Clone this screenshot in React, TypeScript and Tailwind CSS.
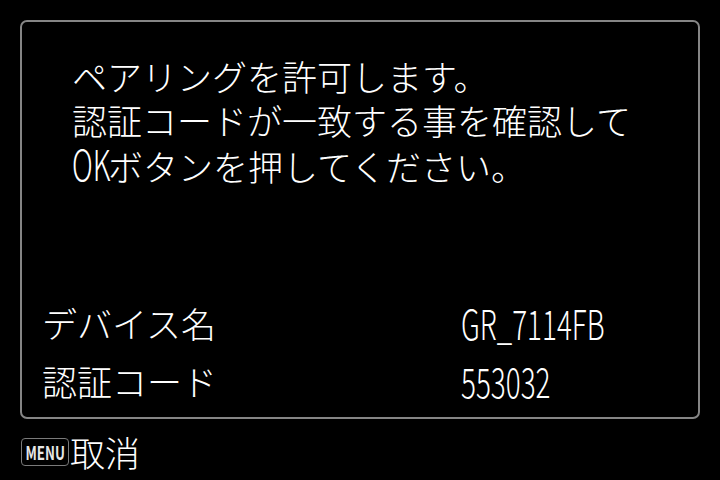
import React from 'react';

const FONT = {
  fontFamily: '"Noto Sans CJK JP", "DejaVu Sans", sans-serif',
};

// Narrow latin text, as on the camera's screen
function Narrow({ text, width, className = '' }: { text: string; width: number; className?: string }) {
  return (
    <span className={`inline-block overflow-visible whitespace-nowrap ${className}`} style={{ width }}>
      <span className="inline-block origin-left scale-x-[0.68]">{text}</span>
    </span>
  );
}

function InfoRow({ label, value, width }: { label: string; value: string; width: number }) {
  return (
    <div className="flex h-[58px] items-center">
      <span className="w-[419px] text-[35px] font-light leading-none">{label}</span>
      <span className="text-[41px] font-light leading-none">
        <Narrow text={value} width={width} />
      </span>
    </div>
  );
}

export default function App() {
  return (
    <div className="h-[480px] w-[720px] overflow-hidden bg-black text-white" style={FONT}>
      <div className="px-[20px] pt-[20px]">
        <section className="flex h-[399px] flex-col rounded-[7px] border-2 border-[#858585] pl-[20px]">
          <div className="pl-[30px] pt-[32px] text-[35px] font-light leading-[44px]">
            <p>ペアリングを許可します。</p>
            <p>認証コードが一致する事を確認して</p>
            <p>
              <Narrow text="OK" width={36} className="text-[42px] leading-none" />
              ボタンを押してください。
            </p>
          </div>
          <div className="mt-auto pb-[8px]">
            <InfoRow label="デバイス名" value="GR_7114FB" width={145} />
            <InfoRow label="認証コード" value="553032" width={96} />
          </div>
        </section>
      </div>
      <footer className="mt-[15px] flex items-center pl-[21px]">
        <span className="flex h-[28px] w-[48px] items-center justify-center rounded-[4px] border border-[#7a7a7a] bg-black text-[19px] font-bold leading-none text-[#e6e6e6]">
          <span className="inline-block scale-x-[0.7]">MENU</span>
        </span>
        <span className="ml-[1px] text-[35px] font-light leading-none">取消</span>
      </footer>
    </div>
  );
}
